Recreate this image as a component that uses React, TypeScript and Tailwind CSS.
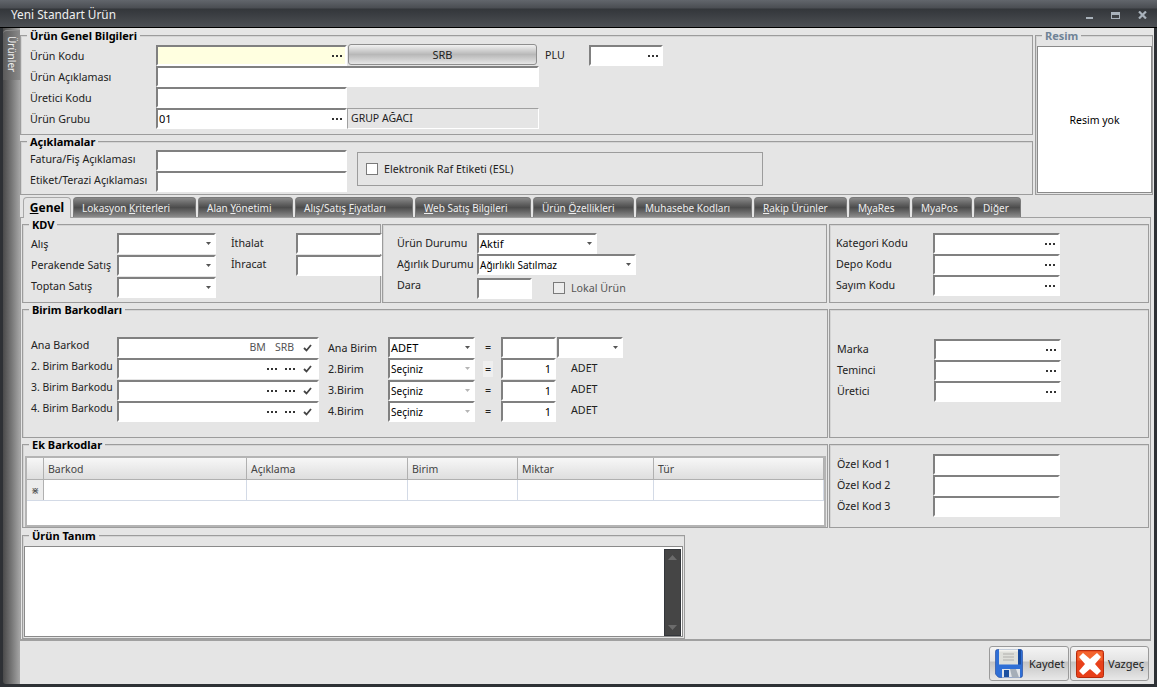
import React from "react";

const font = { fontFamily: '"Noto Sans", Tahoma, sans-serif' };

function Dots() {
  return (
    <span className="flex gap-[2px] shrink-0">
      <i className="w-[2px] h-[2px] bg-[#333]" />
      <i className="w-[2px] h-[2px] bg-[#333]" />
      <i className="w-[2px] h-[2px] bg-[#333]" />
    </span>
  );
}

function Caret({ disabled }: { disabled?: boolean }) {
  return (
    <svg width="5" height="3" viewBox="0 0 5 3" className="shrink-0">
      <path d="M0 0h5L2.5 3z" fill={disabled ? "#b5b5b5" : "#555"} />
    </svg>
  );
}

function Check() {
  return (
    <svg width="9" height="8" viewBox="0 0 9 8" className="shrink-0">
      <path d="M1 4l2.5 2.5L8 1" fill="none" stroke="#444" strokeWidth="1.8" />
    </svg>
  );
}

function Box({ className = "", children }: { className?: string; children?: React.ReactNode }) {
  return (
    <div
      className={
        "flex items-center overflow-hidden border-2 border-t-[#808080] border-l-[#808080] border-b-white border-r-white text-black text-[11px] leading-none " +
        className
      }
    >
      {children}
    </div>
  );
}

function Input({ className = "", dots, value }: { className?: string; dots?: boolean; value?: string }) {
  return (
    <Box className={"bg-white h-[21px] pl-[1px] pr-[3px] " + className}>
      <span className="flex-1">{value}</span>
      {dots && <Dots />}
    </Box>
  );
}

function Select({ className = "", value, disabled, small }: { className?: string; value?: string; disabled?: boolean; small?: boolean }) {
  return (
    <Box className={"bg-white h-[21px] pl-[1px] pr-[3px] " + className}>
      <span className={"flex-1 whitespace-nowrap " + (small ? "text-[10px]" : "")}>{value}</span>
      <Caret disabled={disabled} />
    </Box>
  );
}

function Label({ children, className = "" }: { children: React.ReactNode; className?: string }) {
  return <div className={"flex items-center whitespace-nowrap text-[10.7px] leading-none text-[#222] " + className}>{children}</div>;
}

function Group({
  title,
  className = "",
  children,
  muted,
}: {
  title?: string;
  className?: string;
  children?: React.ReactNode;
  muted?: boolean;
}) {
  return (
    <div className={"relative border border-[#9c9c9c] shadow-[inset_1px_1px_0_#d4d4d4] " + className}>
      {title && (
        <div
          className={
            "absolute left-[6px] top-[-7px] bg-[#e5e5e5] px-[3px] text-[11px] leading-[14px] font-bold whitespace-nowrap " +
            (muted ? "text-[#6f8296]" : "text-black")
          }
        >
          {title}
        </div>
      )}
      {children}
    </div>
  );
}

function CheckBox({ className = "" }: { className?: string }) {
  return <div className={"w-[12px] h-[12px] bg-white border border-[#7a7a7a] shrink-0 " + className} />;
}

const tabs: { w: string; node: React.ReactNode }[] = [
  { w: "w-[123px]", node: <>Lokasyon <u>K</u>riterleri</> },
  { w: "w-[95px]", node: <>Alan <u>Y</u>önetimi</> },
  { w: "w-[118px]", node: <>Alış/Satış <u>F</u>iyatları</> },
  { w: "w-[116px]", node: <><u>W</u>eb Satış Bilgileri</> },
  { w: "w-[101px]", node: <>Ürün <u>Ö</u>zellikleri</> },
  { w: "w-[116px]", node: <>Muhasebe Kodları</> },
  { w: "w-[93px]", node: <><u>R</u>akip Ürünler</> },
  { w: "w-[61px]", node: <>M<u>y</u>aRes</> },
  { w: "w-[60px]", node: <>MyaPos</> },
  { w: "w-[47px]", node: <>Diğer</> },
];

const cols: { name: string; w: string }[] = [
  { name: "Barkod", w: "w-[203px]" },
  { name: "Açıklama", w: "w-[161px]" },
  { name: "Birim", w: "w-[110px]" },
  { name: "Miktar", w: "w-[136px]" },
  { name: "Tür", w: "flex-1" },
];

function Disk() {
  return (
    <svg width="28" height="29" viewBox="0 0 28 29" className="shrink-0">
      <path d="M0.5 2.5Q0.5 0.5 2.5 0.5h23Q27.5 0.5 27.5 2.5v24q0 2-2 2H5q-1.5 0-2.5-1L0.5 25z" fill="#2f6fd6" stroke="#1c4598" strokeWidth="0.6" />
      <rect x="4" y="0.5" width="19" height="15" fill="#dedfda" />
      <rect x="4" y="0.5" width="19" height="2" fill="#f2f2ee" />
      <rect x="23" y="0.5" width="3" height="15" fill="#174a9e" />
      <path d="M8 5h11M8 8h11M8 11h11" stroke="#b0b0ab" strokeWidth="1.2" />
      <rect x="7" y="20" width="18" height="8.5" fill="#e2e4e8" />
      <rect x="9" y="21" width="5" height="7" fill="#1c4f9f" />
      <path d="M15 20h6l3 8.5h-7z" fill="#a6aeb8" />
    </svg>
  );
}

function CrossIcon() {
  return (
    <svg width="28" height="28" viewBox="0 0 28 28" className="shrink-0">
      <rect x="0.5" y="0.5" width="27" height="27" rx="2" fill="#e8401a" stroke="#b52b0c" />
      <rect x="1.5" y="1.5" width="25" height="9" fill="#f4652f" />
      <path d="M7 3l7 6 7-6 4 4-6 7 6 7-4 4-7-6-7 6-4-4 6-7-6-7z" fill="#fff" />
    </svg>
  );
}

function FooterButton({ icon, text, className = "" }: { icon: React.ReactNode; text: string; className?: string }) {
  return (
    <div
      className={
        "flex items-center gap-[6px] h-[35px] pl-[5px] rounded-[3px] border border-[#9a9a9a] bg-[linear-gradient(#f4f4f4,#e4e4e4_42%,#c4c4c4_46%,#e8e8e8)] text-[11px] leading-none text-[#222] " +
        className
      }
    >
      {icon}
      {text}
    </div>
  );
}

function BarcodeDots() {
  return (
    <Box className="bg-white h-[21px] justify-end gap-[8px] pr-[5px]">
      <Dots />
      <Dots />
      <Check />
    </Box>
  );
}

export default function App() {
  return (
    <div style={font} className="w-[1157px] h-[687px] flex flex-col overflow-hidden bg-[#2e3135]">
      {/* Title bar */}
      <div className="h-[28px] shrink-0 flex items-center pt-[3px] pl-[11px] pr-[10px] border-b border-black bg-[linear-gradient(#62666c,#4a4d52_30%,#33363a_33%,#4c4f54)] text-[11.8px] leading-none text-[#f0f0f0]">
        <span className="flex-1">Yeni Standart Ürün</span>
        <div className="flex items-center gap-[18px]">
          <span className="mt-[6px] w-[7px] h-[2px] bg-[#a9b2bb]" />
          <span className="w-[9px] h-[7px] border border-t-[3px] border-[#a9b2bb]" />
          <svg width="9" height="8" viewBox="0 0 9 8">
            <path d="M1 0.5l7 7M8 0.5l-7 7" stroke="#a9b2bb" strokeWidth="2.2" />
          </svg>
        </div>
      </div>

      {/* Body */}
      <div className="flex-1 min-h-0 flex pl-[3px] pr-[3px] pb-[3px]">
        <div className="w-[17px] shrink-0 rounded-bl-[3px] bg-gradient-to-r from-[#4a4a4a] to-[#a6a6a6]">
          <div className="mt-[2px] h-[50px] rounded-tl-[4px] pt-[5px] flex justify-center border-t border-[#8a8a8a] bg-gradient-to-r from-[#5a5a5a] to-[#8a8a8a]">
            <span className="[writing-mode:vertical-rl] text-[10px] leading-none text-[#eeeeee]">Ürünler</span>
          </div>
        </div>

        <div className="flex-1 min-w-0 flex flex-col bg-[#e5e5e5]">
          {/* Header groups */}
          <div className="flex gap-[2px] pt-[7px]">
            <div className="w-[1013px] flex flex-col gap-[6px]">
              <Group title="Ürün Genel Bilgileri" className="h-[100px] pl-[9px] pt-[9px]">
                <div className="grid grid-cols-[126px_191px_192px_50px_74px] grid-rows-[21px_21px_21px_21px]">
                  <Label className="pt-[2px]">Ürün Kodu</Label>
                  <Input dots className="bg-[#ffffe0]! w-[191px]" />
                  <div className="h-[21px] -mt-px ml-px w-[189px] flex items-center justify-center rounded-[3px] border border-[#8e8e8e] bg-gradient-to-b from-[#f2f2f2] via-[#b8b8b8] to-[#e6e6e6] text-[11px] leading-none text-[#222]">
                    SRB
                  </div>
                  <Label className="pl-[6px]">PLU</Label>
                  <Input dots />
                  <Label className="pt-[2px]">Ürün Açıklaması</Label>
                  <Input className="col-span-2" />
                  <div className="col-span-2" />
                  <Label className="pt-[2px]">Üretici Kodu</Label>
                  <Input />
                  <div className="col-span-3" />
                  <Label className="pt-[2px]">Ürün Grubu</Label>
                  <Input dots value="01" />
                  <div className="h-[21px] flex items-center pl-[3px] pb-[1px] border border-[#a0a0a0] border-b-white border-r-white text-[10.5px] leading-none text-[#222]">
                    GRUP AĞACI
                  </div>
                </div>
              </Group>
              <Group title="Açıklamalar" className="h-[54px] pl-[9px] pt-[8px]">
                <div className="flex">
                  <div className="grid grid-cols-[126px_191px] grid-rows-[21px_21px]">
                    <Label className="pb-[3px]">Fatura/Fiş Açıklaması</Label>
                    <Input />
                    <Label className="pb-[3px]">Etiket/Terazi Açıklaması</Label>
                    <Input />
                  </div>
                  <div className="ml-[10px] mt-[2px] w-[406px] h-[34px] flex items-center gap-[6px] pl-[8px] border border-[#9c9c9c]">
                    <CheckBox />
                    <Label>Elektronik Raf Etiketi (ESL)</Label>
                  </div>
                </div>
              </Group>
            </div>
            <Group muted title="Resim" className="w-[118px] h-[160px] pt-[10px] pl-[1px]">
              <div className="w-[115px] h-[147px] pt-[2px] flex items-center justify-center bg-white border border-[#8a8a8a] text-[10.5px] leading-none text-black">
                Resim yok
              </div>
            </Group>
          </div>

          {/* Tabs */}
          <div className="flex gap-[2px] pl-[3px] mt-[2px] h-[20px] relative z-10">
            <div className="w-[48px] h-[21px] flex items-center justify-center rounded-t-[4px] border border-b-0 border-[#a8a8a8] bg-[#e5e5e5] text-[12px] leading-none font-bold text-black">
              <span><u>G</u>enel</span>
            </div>
            {tabs.map((t, i) => (
              <div
                key={i}
                className={
                  t.w +
                  " h-[20px] flex items-center pl-[8px] rounded-t-[4px] border border-b-0 border-[#7a7a7a] bg-gradient-to-b from-[#8a8a8a] via-[#4c4c4c] to-[#8c8c8c] text-[10px] leading-none text-[#efefef] whitespace-nowrap"
                }
              >
                <span>{t.node}</span>
              </div>
            ))}
          </div>

          {/* Tab panel */}
          <div className="w-[1131px] h-[424px] border border-[#a0a0a0] border-b-2 pl-[1px] pt-[6px] flex flex-col">
            <div className="flex h-[79px] shrink-0">
              <Group title="KDV" className="w-[359px] pl-[8px] pt-[8px]">
                <div className="flex">
                  <div className="grid grid-cols-[86px_99px] grid-rows-[22px_22px_22px]">
                    <Label>Alış</Label>
                    <Select />
                    <Label className="pb-[2px]">Perakende Satış</Label>
                    <Select />
                    <Label className="pb-[4px]">Toptan Satış</Label>
                    <Select />
                  </div>
                  <div className="ml-[15px] grid grid-cols-[65px_86px] grid-rows-[22px_22px] relative z-10">
                    <Label className="pb-[1px]">İthalat</Label>
                    <Input />
                    <Label className="pb-[3px]">İhracat</Label>
                    <Input />
                  </div>
                </div>
              </Group>
              <Group className="ml-px w-[445px] pl-[14px] pt-[8px]">
                <div className="grid grid-cols-[80px_160px_1fr] grid-rows-[21px_21px_24px]">
                  <Label>Ürün Durumu</Label>
                  <Select value="Aktif" className="w-[120px]" />
                  <div />
                  <Label>Ağırlık Durumu</Label>
                  <Select small value="Ağırlıklı Satılmaz" className="w-[159px]" />
                  <div />
                  <Label className="pb-[3px]">Dara</Label>
                  <div className="flex items-end col-span-2">
                    <Input className="w-[55px]" />
                    <div className="ml-[21px] mb-[5px] flex items-center gap-[6px]">
                      <CheckBox className="bg-[#ededed]!" />
                      <Label className="text-[#555]!">Lokal Ürün</Label>
                    </div>
                  </div>
                </div>
              </Group>
              <Group className="ml-[2px] w-[320px] pl-[6px] pt-[8px]">
                <div className="grid grid-cols-[97px_127px] grid-rows-[21px_21px_21px]">
                  <Label>Kategori Kodu</Label>
                  <Input dots />
                  <Label>Depo Kodu</Label>
                  <Input dots />
                  <Label>Sayım Kodu</Label>
                  <Input dots />
                </div>
              </Group>
            </div>

            <div className="flex h-[129px] shrink-0 mt-[6px]">
              <Group title="Birim Barkodları" className="w-[806px] pl-[8px] pt-[27px]">
                <div className="grid grid-cols-[86px_202px_69px_87px_26px_56px_66px] grid-rows-[21px_22px_21px_21px]">
                  <Label className="pb-[5px]">Ana Barkod</Label>
                  <Box className="bg-white h-[21px] justify-end gap-[9px] pr-[5px]">
                    <span className="text-[#555] text-[10.5px]">BM</span>
                    <span className="text-[#555] text-[10.5px]">SRB</span>
                    <Check />
                  </Box>
                  <Label className="pl-[9px] pt-[2px]">Ana Birim</Label>
                  <Select value="ADET" />
                  <Label className="justify-center">=</Label>
                  <Input className="w-[55px]" />
                  <Select />

                  <Label className="pb-[6px] text-[10.4px]!">2. Birim Barkodu</Label>
                  <BarcodeDots />
                  <Label className="pl-[9px]">2.Birim</Label>
                  <Select small value="Seçiniz" disabled />
                  <Label className="justify-center">
                    <span className="bg-[#efefef] px-[2px] py-[3px]">=</span>
                  </Label>
                  <Input className="w-[55px] pr-[3px]! text-right" value="1" />
                  <Label className="pl-[14px] pb-[2px]">ADET</Label>

                  <Label className="pb-[6px] text-[10.4px]!">3. Birim Barkodu</Label>
                  <BarcodeDots />
                  <Label className="pl-[9px]">3.Birim</Label>
                  <Select small value="Seçiniz" disabled />
                  <Label className="justify-center">=</Label>
                  <Input className="w-[55px] pr-[3px]! text-right" value="1" />
                  <Label className="pl-[14px] pb-[2px]">ADET</Label>

                  <Label className="pb-[6px] text-[10.4px]!">4. Birim Barkodu</Label>
                  <BarcodeDots />
                  <Label className="pl-[9px]">4.Birim</Label>
                  <Select small value="Seçiniz" disabled />
                  <Label className="justify-center">=</Label>
                  <Input className="w-[55px] pr-[3px]! text-right" value="1" />
                  <Label className="pl-[14px] pb-[2px]">ADET</Label>
                </div>
              </Group>
              <Group className="ml-[1px] w-[320px] pl-[7px] pt-[29px]">
                <div className="grid grid-cols-[97px_127px] grid-rows-[21px_21px_21px]">
                  <Label>Marka</Label>
                  <Input dots />
                  <Label>Teminci</Label>
                  <Input dots />
                  <Label>Üretici</Label>
                  <Input dots />
                </div>
              </Group>
            </div>

            <div className="flex h-[84px] shrink-0 mt-[6px]">
              <Group title="Ek Barkodlar" className="w-[806px] pl-[2px] pt-[11px]">
                <div className="w-[801px] h-[71px] border-2 border-[#b4b4b4] bg-white">
                  <div className="flex h-[22px] border-b border-[#b0b0b0] bg-gradient-to-b from-[#f7f7f7] to-[#dedede]">
                    <div className="w-[17px] border-r border-[#b0b0b0]" />
                    {cols.map((c) => (
                      <div key={c.name} className={c.w + " flex items-center pl-[4px] pt-[2px] border-r border-[#b0b0b0] text-[10.5px] leading-none text-[#444]"}>
                        {c.name}
                      </div>
                    ))}
                  </div>
                  <div className="flex h-[21px] border-b border-[#d3dae6]">
                    <div className="w-[17px] flex items-center justify-center border-r border-[#b0b0b0] bg-[#ececec] text-[10px] leading-none text-[#555]">
                      ⋇
                    </div>
                    {cols.map((c) => (
                      <div key={c.name} className={c.w + " border-r border-[#d3dae6]"} />
                    ))}
                  </div>
                </div>
              </Group>
              <Group className="ml-[1px] w-[320px] pl-[7px] pt-[9px]">
                <div className="grid grid-cols-[96px_127px] grid-rows-[21px_21px_21px]">
                  <Label>Özel Kod 1</Label>
                  <Input />
                  <Label>Özel Kod 2</Label>
                  <Input />
                  <Label>Özel Kod 3</Label>
                  <Input />
                </div>
              </Group>
            </div>

            <Group title="Ürün Tanım" className="mt-[7px] w-[663px] h-[104px] pl-[1px] pt-[10px]">
              <div className="w-[659px] h-[91px] flex justify-end pr-[1px] pt-[2px] bg-white border border-[#8a8a8a]">
                <div className="w-[17px] h-[87px] flex flex-col items-center justify-between py-[5px] bg-[#454545] border border-[#33363b]">
                  <svg width="9" height="5" viewBox="0 0 9 5"><path d="M0 5h9L4.5 0z" fill="#6b6b6b" /></svg>
                  <svg width="9" height="5" viewBox="0 0 9 5"><path d="M0 0h9L4.5 5z" fill="#6b6b6b" /></svg>
                </div>
              </div>
            </Group>
          </div>

          {/* Footer */}
          <div className="flex justify-end gap-[1px] pr-[5px] pt-[5px]">
            <FooterButton className="w-[80px]" icon={<Disk />} text="Kaydet" />
            <FooterButton className="w-[79px] gap-[4px]!" icon={<CrossIcon />} text="Vazgeç" />
          </div>
        </div>
      </div>
    </div>
  );
}
